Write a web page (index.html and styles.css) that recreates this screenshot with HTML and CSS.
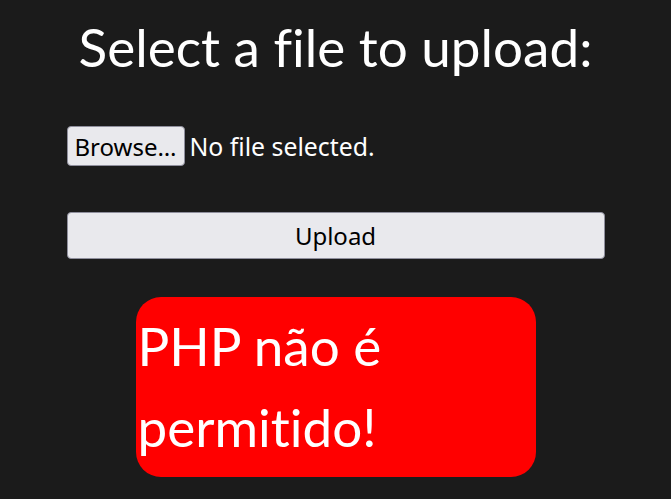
FILE: index.html
```html
<!DOCTYPE html>
<html lang="pt">
<head>
<meta charset="utf-8">
<title>Upload</title>
<link rel="stylesheet" href="styles.css">
</head>
<body>
<h1 class="title">Select a file to upload:</h1>
<form class="upload-form">
  <div class="file-row">
    <label class="browse-btn">Browse…<input class="file-input" type="file" name="file"></label>
    <span class="file-status">No file selected.</span>
  </div>
  <button class="upload-btn" type="button">Upload</button>
</form>
<div class="error-box">PHP não é permitido!</div>
</body>
</html>
```
FILE: styles.css
```css
html, body {
  margin: 0;
  padding: 0;
  background: #1b1b1b;
  color: #ffffff;
}
body {
  display: flex;
  flex-direction: column;
  align-items: center;
  font-family: "Lato", "Open Sans", sans-serif;
  font-variant-ligatures: none;
}
.title {
  margin: 15px 0 0 0;
  font-size: 53px;
  font-weight: 400;
  line-height: 64px;
  text-align: center;
}
.upload-form {
  width: 538px;
  display: flex;
  flex-direction: column;
  margin-top: 47px;
}
.file-row {
  display: flex;
  align-items: center;
  gap: 5px;
  font-family: "Noto Sans", sans-serif;
  font-size: 24px;
}
.browse-btn {
  box-sizing: border-box;
  height: 40px;
  width: 118px;
  display: flex;
  align-items: center;
  justify-content: center;
  background: #e9e9ed;
  color: #000;
  border: 1px solid #8f8f9d;
  border-radius: 4px;
  cursor: pointer;
  white-space: nowrap;
}
.file-input {
  display: none;
}
.file-status {
  color: #fff;
  font-size: 24.8px;
}
.upload-btn {
  box-sizing: border-box;
  margin-top: 46px;
  height: 47px;
  width: 100%;
  background: #e9e9ed;
  color: #000;
  border: 1px solid #8f8f9d;
  border-radius: 4px;
  font-family: "Noto Sans", sans-serif;
  font-size: 24px;
  padding: 0;
}
.error-box {
  box-sizing: border-box;
  margin-top: 38px;
  width: 400px;
  height: 180px;
  background: #ff0000;
  border-radius: 25px;
  font-size: 53px;
  line-height: 81px;
  padding: 8px 2px 0 2px;
  color: #fff;
}
```
